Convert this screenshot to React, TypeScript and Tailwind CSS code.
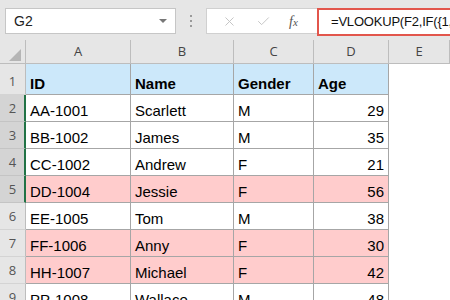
import { X, Check } from "lucide-react";

type Row = { n: number; id: string; name: string; gender: string; age: string; pink?: boolean };

const rows: Row[] = [
  { n: 2, id: "AA-1001", name: "Scarlett", gender: "M", age: "29" },
  { n: 3, id: "BB-1002", name: "James", gender: "M", age: "35" },
  { n: 4, id: "CC-1002", name: "Andrew", gender: "F", age: "21" },
  { n: 5, id: "DD-1004", name: "Jessie", gender: "F", age: "56", pink: true },
  { n: 6, id: "EE-1005", name: "Tom", gender: "M", age: "38" },
  { n: 7, id: "FF-1006", name: "Anny", gender: "F", age: "30", pink: true },
  { n: 8, id: "HH-1007", name: "Michael", gender: "F", age: "42", pink: true },
  { n: 9, id: "PP-1008", name: "Wallace", gender: "M", age: "48" },
];

const formula = "=VLOOKUP(F2,IF({1,0},B2:B9,A2:A9),2,0)";

const cols = "grid grid-cols-[26px_105px_103px_80px_75px_1fr]";
const cell = "flex items-end border-r border-b border-[#a6a6a6] px-[4px] pb-[2px] leading-[17px] truncate";

export default function App() {
  return (
    <div className="h-[300px] w-[450px] overflow-hidden bg-white font-['Liberation_Sans',Arial,sans-serif] text-[15px] text-black">
      <div className="flex h-[40px] items-start overflow-hidden bg-[#e6e6e6] pt-[8px]">
        <div className="ml-[5px] flex h-[26px] w-[171px] shrink-0 items-center justify-between border border-[#c6c6c6] bg-white pl-[8px] pr-[8px] text-[14px] text-[#222]">
          <span>G2</span>
          <span className="h-0 w-0 border-x-[4px] border-t-[4px] border-x-transparent border-t-[#777]" />
        </div>
        <div className="flex h-[26px] w-[30px] shrink-0 flex-col items-center justify-center gap-[3px]">
          <span className="h-[2px] w-[2px] bg-[#9a9a9a]" />
          <span className="h-[2px] w-[2px] bg-[#9a9a9a]" />
          <span className="h-[2px] w-[2px] bg-[#9a9a9a]" />
        </div>
        <div className="flex h-[26px] w-[111px] shrink-0 items-center border border-r-0 border-[#d0d0d0] bg-white">
          <X className="ml-[15px] h-[15px] w-[15px] text-[#c2c2c2]" strokeWidth={1.5} />
          <Check className="ml-[19px] h-[15px] w-[15px] text-[#c2c2c2]" strokeWidth={1.5} />
          <span className="ml-[18px] font-['Liberation_Serif',serif] text-[14px] italic text-[#555]">
            f<span className="text-[11px]">x</span>
          </span>
        </div>
        <div className="flex h-[28px] w-[360px] shrink-0 items-center border-2 border-[#e2564c] bg-white pl-[12px] text-[13px] tracking-[-0.2px] whitespace-nowrap text-[#111]">
          {formula}
        </div>
      </div>

      <div className={`${cols} h-[24px] border-b border-[#bdbdbd] bg-[#e6e6e6] font-['Open_Sans',sans-serif] text-[13px] text-[#444]`}>
        <div className="relative border-r border-[#bdbdbd]">
          <svg className="absolute bottom-[2px] right-[4px]" width="12" height="12" viewBox="0 0 12 12">
            <polygon points="12,0 12,12 0,12" fill="#b5b5b5" />
          </svg>
        </div>
        {["A", "B", "C", "D", "E"].map((c) => (
          <div key={c} className="flex items-center justify-center border-r border-[#bdbdbd]">
            {c}
          </div>
        ))}
      </div>

      <div className={`${cols} h-[31px]`}>
        <RowHead n={1} />
        {["ID", "Name", "Gender", "Age"].map((h) => (
          <div key={h} className={`${cell} bg-[#cce8fa] font-bold`}>
            {h}
          </div>
        ))}
        <div />
      </div>

      {rows.map((r) => {
        const bg = r.pink ? "bg-[#ffcccc]" : "bg-white";
        return (
          <div key={r.n} className={`${cols} h-[27px]`}>
            <RowHead n={r.n} selected={r.n <= 5} />
            <div className={`${cell} ${bg}`}>{r.id}</div>
            <div className={`${cell} ${bg}`}>{r.name}</div>
            <div className={`${cell} ${bg}`}>{r.gender}</div>
            <div className={`${cell} ${bg} justify-end`}>{r.age}</div>
            <div />
          </div>
        );
      })}
    </div>
  );
}

function RowHead({ n, selected }: { n: number; selected?: boolean }) {
  return (
    <div
      className={
        selected
          ? "flex items-end justify-center border-b border-r-2 border-b-[#c4c4c4] border-r-[#217346] bg-[#d4d4d4] pb-[3px] pl-[1px] font-['Open_Sans',sans-serif] text-[13px] text-[#555]"
          : "flex items-end justify-center border-b border-r border-b-[#d4d4d4] border-r-[#bdbdbd] bg-[#e6e6e6] pb-[3px] font-['Open_Sans',sans-serif] text-[13px] text-[#555]"
      }
    >
      {n}
    </div>
  );
}
